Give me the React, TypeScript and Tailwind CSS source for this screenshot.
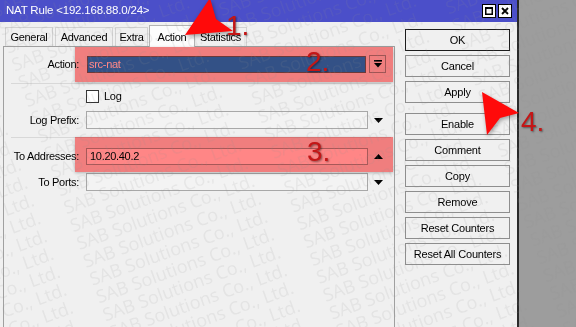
import React from "react";

const WM = "SAB Solutions Co., Ltd.";

function Watermark() {
  const lines = Array.from({ length: 40 });
  const cells = Array.from({ length: 6 });
  return (
    <div className="pointer-events-none absolute inset-0 z-20 overflow-hidden">
      <div className="absolute left-[-160px] top-[-260px] w-[1100px] rotate-[-20deg] font-['Open_Sans',sans-serif] text-[18px] leading-[19px] text-[rgba(150,150,150,0.13)]">
        {lines.map((_, i) => (
          <div key={i} className="flex gap-[26px] whitespace-nowrap">
            {cells.map((__, j) => (
              <span key={j}>{WM}</span>
            ))}
          </div>
        ))}
      </div>
    </div>
  );
}

function Btn({ label, def }: { label: string; def?: boolean }) {
  return (
    <div
      className={
        def
          ? "flex h-[22px] w-[105px] items-center justify-center border border-[#1c1c1c] text-[11px] tracking-[-0.2px] text-black"
          : "flex h-[22px] w-[105px] items-center justify-center border border-[#8e8e8e] text-[11px] tracking-[-0.2px] text-black"
      }
    >
      {label}
    </div>
  );
}

function Tri({ up }: { up?: boolean }) {
  return (
    <svg width="9" height="5" viewBox="0 0 9 5">
      {up ? <polygon points="0,5 9,5 4.5,0" fill="#000" /> : <polygon points="0,0 9,0 4.5,5" fill="#000" />}
    </svg>
  );
}

export default function App() {
  return (
    <div className="relative flex h-[327px] w-[576px] overflow-hidden bg-[#9d9d9d] font-['Liberation_Sans',Arial,sans-serif] text-[11px] text-black">
      {/* window */}
      <div className="flex w-[519px] flex-col border-r-2 border-[#2a2a2a] bg-[#f0f0f0]">
        {/* title bar */}
        <div className="flex h-[22px] items-center bg-[#4b4fc9] pl-[6px] pr-[5px]">
          <span className="text-[11.5px] tracking-[-0.2px] text-white">NAT Rule &lt;192.168.88.0/24&gt;</span>
          <div className="ml-auto flex gap-[2px]">
            <div className="flex h-[14px] w-[14px] items-center justify-center border border-black bg-white">
              <svg width="8" height="8" viewBox="0 0 8 8">
                <rect x="0.75" y="0.75" width="6.5" height="6.5" fill="none" stroke="#000" strokeWidth="1.5" />
                <rect x="0" y="0" width="8" height="2" fill="#000" />
              </svg>
            </div>
            <div className="flex h-[14px] w-[14px] items-center justify-center border border-black bg-white">
              <svg width="8" height="8" viewBox="0 0 8 8">
                <path d="M1 1 L7 7 M7 1 L1 7" stroke="#000" strokeWidth="1.8" />
              </svg>
            </div>
          </div>
        </div>

        <div className="flex flex-1">
          {/* left part */}
          <div className="flex w-[395px] flex-col pl-[3px]">
            {/* tabs */}
            <div className="flex h-[24px] items-end pl-[2px] tracking-[-0.3px]">
              <div className="flex h-[19px] w-[48px] items-center justify-center border border-b-0 border-[#d2d2d2]">General</div>
              <div className="ml-[2px] flex h-[19px] w-[58px] items-center justify-center border border-b-0 border-[#d2d2d2]">Advanced</div>
              <div className="ml-[2px] flex h-[19px] w-[33px] items-center justify-center border border-b-0 border-[#d2d2d2]">Extra</div>
              <div className="relative z-[1] mb-[-1px] ml-[1px] flex h-[22px] w-[46px] items-start justify-center border border-b-0 border-[#b4b4b4] bg-[#fcfcfc] pt-[3px]">Action</div>
              <div className="flex h-[19px] w-[52px] items-center justify-center border border-b-0 border-l-0 border-[#d2d2d2]">Statistics</div>
            </div>
            {/* panel */}
            <div className="flex flex-1 flex-col border border-b-0 border-[#a0a0a0] tracking-[-0.3px]">
              {/* Action */}
              <div className="mt-[8px] flex h-[18px] items-center">
                <div className="w-[75px] text-right">Action:</div>
                <div className="ml-[8px] flex h-[17px] w-[279px] items-center border border-[#6c6c6c] bg-[#3399ff] pl-[1px] text-white">src-nat</div>
                <div className="ml-[3px] flex h-[18px] w-[17px] items-center justify-center border border-[#a0a0a0]">
                  <svg width="8" height="8" viewBox="0 0 8 8">
                    <rect x="0" y="0" width="8" height="1.6" fill="#000" />
                    <polygon points="0,3 8,3 4,7.5" fill="#000" />
                  </svg>
                </div>
              </div>
              <div className="ml-[7px] mr-[3px] mt-[10px] h-[1px] bg-[#d8d8d8]" />
              {/* Log */}
              <div className="mt-[6px] flex h-[13px] items-center">
                <div className="ml-[82px] h-[13px] w-[13px] border border-[#333] bg-white" />
                <div className="ml-[5px]">Log</div>
              </div>
              {/* Log Prefix */}
              <div className="mt-[8px] flex h-[18px] items-center">
                <div className="w-[75px] text-right">Log Prefix:</div>
                <div className="ml-[7px] h-[18px] w-[282px] border border-[#a8a8a8] bg-[#f3f3f3]" />
                <div className="ml-[1px] flex w-[18px] items-center justify-center">
                  <Tri />
                </div>
              </div>
              <div className="ml-[7px] mr-[3px] mt-[8px] h-[1px] bg-[#d8d8d8]" />
              {/* To Addresses */}
              <div className="mt-[10px] flex h-[17px] items-center">
                <div className="w-[75px] text-right">To Addresses:</div>
                <div className="ml-[7px] flex h-[17px] w-[282px] items-center border border-[#a8a8a8] bg-white pl-[3px]">10.20.40.2</div>
                <div className="ml-[1px] flex w-[18px] items-center justify-center">
                  <Tri up />
                </div>
              </div>
              {/* To Ports */}
              <div className="mt-[8px] flex h-[18px] items-center">
                <div className="w-[75px] text-right">To Ports:</div>
                <div className="ml-[7px] h-[18px] w-[282px] border border-[#a8a8a8] bg-[#f3f3f3]" />
                <div className="ml-[1px] flex w-[18px] items-center justify-center">
                  <Tri />
                </div>
              </div>
            </div>
          </div>

          {/* buttons */}
          <div className="flex flex-col gap-[4px] pl-[10px] pt-[7px]">
            <Btn label="OK" def />
            <Btn label="Cancel" />
            <Btn label="Apply" />
            <div className="mt-[6px]">
              <Btn label="Enable" />
            </div>
            <Btn label="Comment" />
            <Btn label="Copy" />
            <Btn label="Remove" />
            <Btn label="Reset Counters" />
            <Btn label="Reset All Counters" />
          </div>
        </div>
      </div>
      <div className="flex-1" />

      {/* red highlight overlays */}
      <div className="absolute left-[75px] top-[47px] z-10 h-[35px] w-[318px] bg-[#ff8686] mix-blend-multiply shadow-[0_1px_3px_rgba(0,0,0,0.25)]" />
      <div className="absolute left-[75px] top-[137px] z-10 h-[35px] w-[318px] bg-[#ff8686] mix-blend-multiply shadow-[0_1px_3px_rgba(0,0,0,0.25)]" />

      <Watermark />

      {/* arrows */}
      <svg className="pointer-events-none absolute inset-0 z-30 [filter:drop-shadow(1px_2px_2px_rgba(0,0,0,0.35))]" width="576" height="327" viewBox="0 0 576 327">
        <polygon points="185,35 210,-2 216,19 233,31" fill="#ff0a0a" />
        <polygon points="482,92 519,113 500,118 487,135" fill="#ff0a0a" />
      </svg>

      {/* number labels */}
      <div className="pointer-events-none absolute left-[226px] top-[12px] z-30 text-[28px] leading-[28px] text-[#c41616] [text-shadow:1px_1px_2px_rgba(0,0,0,0.45)]">1.</div>
      <div className="pointer-events-none absolute left-[306px] top-[48px] z-30 text-[28px] leading-[28px] text-[#c41616] [text-shadow:1px_1px_2px_rgba(0,0,0,0.45)]">2.</div>
      <div className="pointer-events-none absolute left-[307px] top-[138px] z-30 text-[28px] leading-[28px] text-[#c41616] [text-shadow:1px_1px_2px_rgba(0,0,0,0.45)]">3.</div>
      <div className="pointer-events-none absolute left-[521px] top-[108px] z-30 text-[28px] leading-[28px] text-[#c41616] [text-shadow:1px_1px_2px_rgba(0,0,0,0.45)]">4.</div>
    </div>
  );
}
